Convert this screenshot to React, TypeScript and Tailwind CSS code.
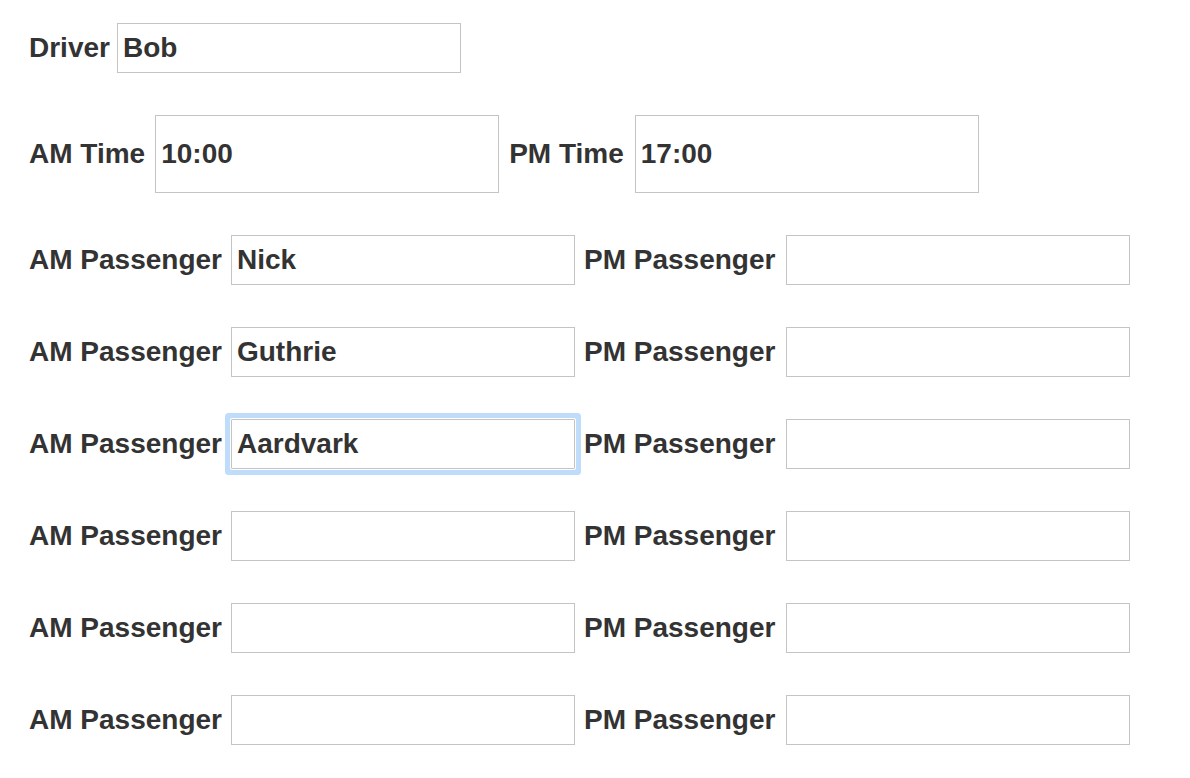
import { useState } from 'react';

const labelClass = 'font-bold text-[28px] text-[#333] whitespace-nowrap leading-none';
const inputClass =
  'w-[344px] border border-[#c4c4c4] bg-white px-[5px] font-bold text-[28px] text-[#333] outline-none';

function Field({
  label,
  value,
  tall,
  focused,
  gap = 'gap-[9px]',
}: {
  label: string;
  value: string;
  tall?: boolean;
  focused?: boolean;
  gap?: string;
}) {
  const [text, setText] = useState(value);
  return (
    <div className={`flex items-center ${gap}`}>
      <label className={labelClass}>{label}</label>
      <input
        type="text"
        value={text}
        onChange={(e) => setText(e.target.value)}
        className={`${inputClass} ${tall ? 'h-[78px]' : 'h-[50px]'} ${
          focused ? 'rounded-[1px] shadow-[0_0_0_1px_#ffffff,0_0_0_6px_#c0dcfb]' : ''
        }`}
      />
    </div>
  );
}

export default function App() {
  const passengers = [
    { am: 'Nick', pm: '' },
    { am: 'Guthrie', pm: '' },
    { am: 'Aardvark', pm: '', focused: true },
    { am: '', pm: '' },
    { am: '', pm: '' },
    { am: '', pm: '' },
  ];

  return (
    <div
      className="min-h-screen bg-white pl-[29px] pt-[23px] flex flex-col gap-[42px]"
      style={{ fontFamily: '"Liberation Sans", Arial, sans-serif' }}
    >
      <Field label="Driver" value="Bob" gap="gap-[7px]" />

      <div className="flex items-center gap-[10px]">
        <Field label="AM Time" value="10:00" tall gap="gap-[10px]" />
        <Field label="PM Time" value="17:00" tall gap="gap-[11px]" />
      </div>

      {passengers.map((p, i) => (
        <div key={i} className="flex items-center gap-[9px]">
          <Field label="AM Passenger" value={p.am} focused={p.focused} />
          <Field label="PM Passenger" value={p.pm} gap="gap-[11px]" />
        </div>
      ))}
    </div>
  );
}
